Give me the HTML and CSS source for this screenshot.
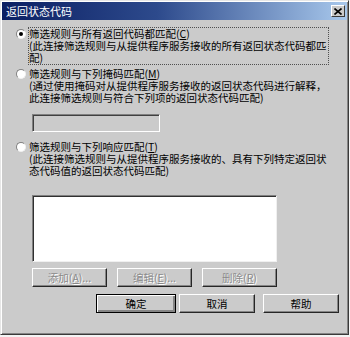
FILE: index.html
```html
<!DOCTYPE html>
<html lang="zh-CN">
  <head>
    <meta charset="UTF-8" />
    <meta name="viewport" content="width=device-width, initial-scale=1.0" />
    <title>返回状态代码</title>
    <link rel="stylesheet" href="styles.css">
  </head>
  <body>
    <div class="window">
      <div class="titlebar">
        <span class="title">返回状态代码</span>
        <span class="close">
          <svg width="8" height="7" viewBox="0 0 8 7">
            <path d="M0.5 0.5L7.5 6.5M7.5 0.5L0.5 6.5" stroke="#000" stroke-width="1.6" fill="none" />
          </svg>
        </span>
      </div>

      <div class="content">
        <div class="option first">
          <span class="radio checked"></span>
          <span class="label focused">筛选规则与所有返回代码都匹配(<u>C</u>)<br />(此连接筛选规则与从提供程序服务接收的所有返回状态代码都匹<br />配)</span>
        </div>

        <div class="option">
          <span class="radio"></span>
          <span class="label">筛选规则与下列掩码匹配(<u>M</u>)<br />(通过使用掩码对从提供程序服务接收的返回状态代码进行解释，<br />此连接筛选规则与符合下列项的返回状态代码匹配)</span>
        </div>

        <div class="mask"></div>

        <div class="option third">
          <span class="radio"></span>
          <span class="label">筛选规则与下列响应匹配(<u>T</u>)<br />(此连接筛选规则与从提供程序服务接收的、具有下列特定返回状<br />态代码值的返回状态代码匹配)</span>
        </div>

        <div class="list"></div>

        <div class="row edit-row">
          <button class="btn disabled w-add">添加(<u>A</u>)...</button>
          <button class="btn disabled w-add">编辑(<u>E</u>)...</button>
          <button class="btn disabled w-add">删除(<u>R</u>)</button>
        </div>

        <div class="row main-row">
          <button class="btn default w-ok">确定</button>
          <button class="btn w-cancel">取消</button>
          <button class="btn w-help">帮助</button>
        </div>
      </div>
    </div>
  </body>
</html>
```

FILE: styles.css
```css
body {
  margin: 0;
  background: #f4f4f4;
  font-family: "Noto Sans CJK SC", "Liberation Sans", sans-serif;
  font-size: 10.5px;
  color: #000;
}

.window {
  box-sizing: border-box;
  width: 349px;
  height: 335px;
  background: #cbcbcb;
  border: 1px solid;
  border-color: #e6e6e6 #3a3a3a #3a3a3a #e6e6e6;
  box-shadow: inset 1px 1px #ffffff, inset -1px -1px #858585;
  padding: 1px;
}

.titlebar {
  height: 18px;
  display: flex;
  align-items: center;
  justify-content: space-between;
  padding: 0 2px 0 4px;
  background: linear-gradient(to right, #0b1f63, #2d4a8c 45%, #a8c8ec);
}

.title {
  color: #fff;
  font-size: 11px;
  line-height: 18px;
}

.close {
  box-sizing: border-box;
  width: 14px;
  height: 12px;
  display: flex;
  align-items: center;
  justify-content: center;
  background: #cbcbcb;
  border: 1px solid;
  border-color: #fff #3a3a3a #3a3a3a #fff;
}

.content {
  padding: 0 0 0 14px;
}

.option {
  display: flex;
  align-items: flex-start;
  margin-top: 2px;
}

.option.first {
  margin-top: 7px;
}

.option.third {
  margin-top: 8px;
}

.radio {
  box-sizing: border-box;
  width: 10px;
  height: 10px;
  margin: 2px 2px 0 0;
  border-radius: 50%;
  background: #fff;
  border: 1px solid;
  border-color: #808080 #f0f0f0 #f0f0f0 #808080;
  display: flex;
  align-items: center;
  justify-content: center;
}

.radio.checked::after {
  content: "";
  width: 4px;
  height: 4px;
  border-radius: 50%;
  background: #000;
}

.label {
  white-space: nowrap;
  line-height: 12px;
  border: 1px dotted transparent;
  padding-right: 1px;
}

.label.focused {
  border-color: #505050;
}

.mask {
  box-sizing: border-box;
  width: 128px;
  height: 18px;
  margin: 9px 0 0 16px;
  background: #cbcbcb;
  border: 1px solid;
  border-color: #808080 #fff #fff #808080;
  box-shadow: inset 1px 1px #404040;
}

.list {
  box-sizing: border-box;
  width: 245px;
  height: 67px;
  margin: 17px 0 0 16px;
  background: #fff;
  border: 1px solid;
  border-color: #808080 #f0f0f0 #f0f0f0 #808080;
  box-shadow: inset 1px 1px #303030;
}

.row {
  display: flex;
}

.edit-row {
  margin: 6px 0 0 16px;
  gap: 10px;
}

.main-row {
  margin: 7px 0 0 80px;
}

.btn {
  box-sizing: border-box;
  height: 19px;
  padding: 0;
  font-family: inherit;
  font-size: 10.5px;
  line-height: 15px;
  color: #000;
  background: #cbcbcb;
  border: 1px solid;
  border-color: #fff #262626 #262626 #fff;
  box-shadow: inset -1px -1px #858585;
}

.btn u {
  text-decoration: underline;
}

.btn.default {
  border: 1px solid #000;
  box-shadow: inset 1px 1px #fff, inset -2px -2px #858585;
}

.btn.disabled {
  color: #8a8a8a;
  text-shadow: 1px 1px 0 #fff;
}

.w-add {
  width: 75px;
}

.w-ok {
  width: 80px;
  margin-right: 3px;
}

.w-cancel {
  width: 76px;
  margin-right: 8px;
}

.w-help {
  width: 76px;
}
```
